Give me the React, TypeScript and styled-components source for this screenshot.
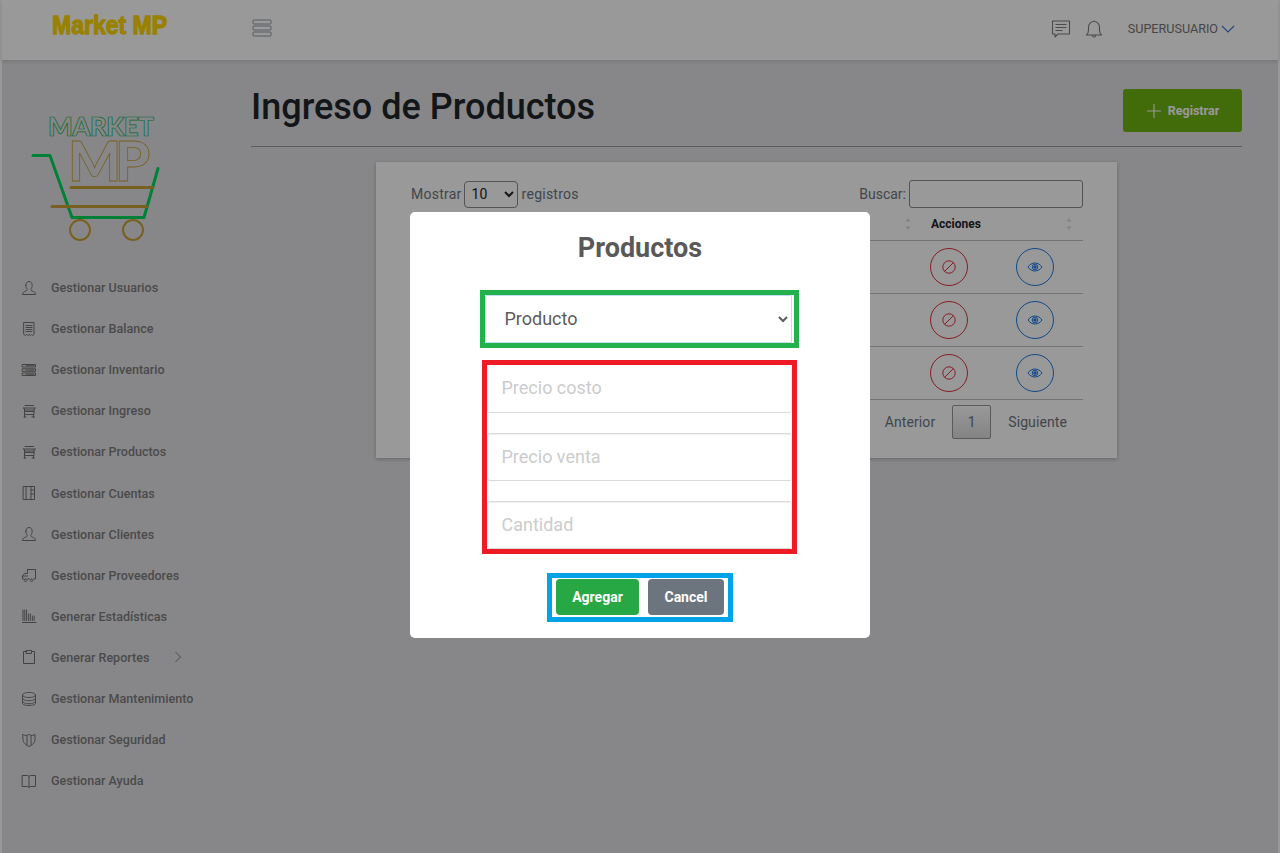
import React from "react";
import styled, { createGlobalStyle } from "styled-components";

const GlobalStyle = createGlobalStyle`
  html, body {
    margin: 0;
    padding: 0;
    height: 100%;
    overflow: hidden;
    background: #fff;
    font-family: Roboto, "Liberation Sans", sans-serif;
  }
  * {
    box-sizing: border-box;
  }
`;

const Page = styled.div`
  margin: 0 2px;
  height: 853px;
  background: #e2e2e5;
  display: flex;
  flex-direction: column;
`;

const Topbar = styled.header`
  height: 60px;
  flex: none;
  background: #fff;
  display: flex;
  align-items: center;
  padding: 0 43px 0 0;
  box-shadow: 0 1px 4px rgba(40, 40, 60, 0.2);
`;

const Brand = styled.div`
  width: 250px;
  padding-left: 50px;
  font-family: "Liberation Sans", sans-serif;
  font-weight: 700;
  font-size: 23px;
  color: #ffd700;
  -webkit-text-stroke: 1.1px #ffd700;
  white-space: nowrap;
  transform: scaleY(1.15);
  transform-origin: 0 50%;
  margin-top: -9px;
`;

const MenuToggle = styled.svg`
  display: block;
  width: 20px;
  height: 18px;
  margin-top: -5px;
`;

const TopRight = styled.div`
  margin-left: auto;
  margin-top: -3px;
  display: flex;
  align-items: center;
  color: #757575;
  font-size: 12.6px;
`;

const UserName = styled.span`
  margin: 0 3px 0 24px;
`;

const Body = styled.div`
  flex: 1;
  display: flex;
  min-height: 0;
`;

const Sidebar = styled.aside`
  width: 249px;
  flex: none;
  padding-top: 53px;
`;

const LogoBox = styled.svg`
  display: block;
  width: 160px;
  height: 131px;
  margin: 0 0 23.05px 27px;
`;

const NavList = styled.nav`
  display: flex;
  flex-direction: column;
`;

const NavItem = styled.a`
  height: 41.1px;
  display: flex;
  align-items: center;
  gap: 14px;
  padding-left: 19px;
  font-size: 12.55px;
  font-weight: 500;
  color: #7c7c7c;
`;

const NavChevron = styled.svg`
  width: 8px;
  height: 12px;
  margin-left: 11px;
`;

const Main = styled.main`
  flex: 1;
  padding: 29px 36px 0 0;
`;

const Heading = styled.div`
  height: 58px;
  display: flex;
  align-items: flex-start;
  justify-content: space-between;
  border-bottom: 1px solid #9b9ba0;
`;

const Title = styled.h1`
  margin: -3px 0 0;
  font-size: 36px;
  font-weight: 500;
  line-height: 43px;
  color: #212529;
`;

const RegisterButton = styled.button`
  width: 119px;
  height: 43px;
  border: none;
  border-radius: 3px;
  background: #6fb30f;
  color: #fff;
  display: flex;
  align-items: center;
  justify-content: center;
  gap: 6px;
  font-family: inherit;
  font-size: 12.5px;
  font-weight: 700;
`;

const Card = styled.section`
  width: 741px;
  height: 296px;
  margin: 15px auto 0;
  padding: 18px 34px 0;
  background: #fff;
  box-shadow: 0 1px 4px rgba(40, 40, 60, 0.3);
  color: #6c757d;
  font-size: 14px;
`;

const TableTools = styled.div`
  height: 28px;
  display: flex;
  align-items: center;
  justify-content: space-between;
`;

const LengthLabel = styled.label`
  display: flex;
  align-items: center;
  gap: 3px;
  padding-left: 1px;
  letter-spacing: 0.25px;
`;

const LengthSelect = styled.select`
  width: 54px;
  height: 27px;
  margin: 0 1px 0 -1px;
  padding: 0 0 0 3px;
  border: 1px solid #8a8a8a;
  border-radius: 4px;
  background: #fff;
  color: #212529;
  font-family: inherit;
  font-size: 14px;
`;

const SearchLabel = styled.label`
  display: flex;
  align-items: center;
  gap: 3px;
`;

const SearchInput = styled.input`
  width: 174px;
  height: 28px;
  border: 1px solid #8a8a8a;
  border-radius: 3px;
  background: #fff;
`;

const TableHead = styled.div`
  height: 29px;
  margin-top: 4px;
  padding-bottom: 4px;
  display: flex;
  align-items: center;
  border-bottom: 1px solid #c4c4c4;
  font-size: 12px;
  font-weight: 700;
  color: #212529;
`;

const SortMark = styled.svg<{ $left: number }>`
  width: 6px;
  height: 14px;
  margin-left: ${(p) => p.$left}px;
`;

const HeadLabel = styled.span`
  margin-left: 20px;
  width: 135px;
`;

const TableRow = styled.div`
  height: 53px;
  display: flex;
  align-items: center;
  justify-content: flex-end;
  gap: 48px;
  padding-right: 29px;
  border-bottom: 1px solid #c4c4c4;
  &:last-of-type {
    height: 54px;
    border-bottom: 2px solid #bcbcbc;
  }
`;

const CircleButton = styled.button<{ $color: string }>`
  width: 38px;
  height: 38px;
  padding: 0;
  border: 1px solid ${(p) => p.$color};
  border-radius: 50%;
  background: transparent;
  color: ${(p) => p.$color};
  display: flex;
  align-items: center;
  justify-content: center;
`;

const Pagination = styled.div`
  margin-top: 5px;
  padding-right: 16px;
  display: flex;
  align-items: center;
  justify-content: flex-end;
  letter-spacing: 0.1px;
`;

const PageCurrent = styled.span`
  width: 39px;
  height: 34px;
  margin: 0 17px;
  display: flex;
  align-items: center;
  justify-content: center;
  border: 1px solid #979797;
  border-radius: 2px;
  background: linear-gradient(#fff, #dcdcdc);
`;

const Overlay = styled.div`
  position: fixed;
  inset: 0;
  background: rgba(0, 0, 0, 0.4);
  display: flex;
  justify-content: center;
  align-items: flex-start;
  padding-top: 212px;
`;

const Modal = styled.div`
  width: 460px;
  height: 426px;
  background: #fff;
  border-radius: 5px;
  display: flex;
  flex-direction: column;
  align-items: center;
  padding-top: 20px;
`;

const ModalTitle = styled.h2`
  margin: 0;
  font-size: 27px;
  font-weight: 700;
  line-height: 32px;
  color: #595959;
`;

const Marked = styled.div<{ $color: string }>`
  border: 5px solid ${(p) => p.$color};
  display: flex;
`;

const ProductBox = styled(Marked)`
  width: 319px;
  height: 58px;
  margin: 26px 2px 0 0;
  padding-right: 2px;
`;

const ProductSelect = styled.select`
  width: 100%;
  height: 48px;
  padding: 0 0 2px 15px;
  border: 1px solid #c3dcf2;
  border-radius: 1px;
  outline: none;
  background: #fff;
  color: #5c5c5c;
  font-family: inherit;
  font-size: 18px;
`;

const PriceBox = styled(Marked)`
  width: 315px;
  height: 194px;
  margin: 12px 2px 0 0;
  flex-direction: column;
  gap: 20.5px;
`;

const PriceInput = styled.input`
  width: 100%;
  flex: 1;
  min-height: 0;
  padding: 0 14px 2px;
  border: 1px solid #d9d9d9;
  border-top-color: transparent;
  border-left-color: #f2f2f2;
  border-right-color: #f2f2f2;
  border-radius: 3px;
  outline: none;
  background: #fff;
  color: #545454;
  font-family: inherit;
  font-size: 18px;
  &:not(:first-child) {
    border-top-color: #d9d9d9;
    box-shadow: inset 0 1px 1px rgba(0, 0, 0, 0.06);
  }
  &::placeholder {
    color: #ccc;
  }
`;

const ActionsBox = styled(Marked)`
  width: 186px;
  height: 49px;
  margin-top: 19px;
  padding: 1px 4px 0;
  gap: 9px;
  justify-content: center;
`;

const ActionButton = styled.button<{ $bg: string; $w: number }>`
  width: ${(p) => p.$w}px;
  height: 36px;
  padding: 0;
  border: none;
  border-radius: 4px;
  background: ${(p) => p.$bg};
  color: #fff;
  font-family: inherit;
  font-size: 14px;
  font-weight: 700;
`;

const Glyph = styled.svg`
  width: 16px;
  height: 16px;
  flex: none;
  fill: none;
  stroke: #717171;
  stroke-width: 1;
  stroke-linejoin: round;
  stroke-linecap: round;
`;

const TopIcon = styled.svg<{ $gap?: number }>`
  width: 20px;
  height: 20px;
  margin-left: ${(p) => p.$gap ?? 0}px;
  fill: none;
  stroke: #7d7d7d;
  stroke-width: 1.1;
  stroke-linejoin: round;
`;

const ActionGlyph = styled.svg`
  width: 16px;
  height: 16px;
  fill: none;
  stroke: currentColor;
  stroke-width: 1;
`;

const icons: Record<string, React.ReactNode> = {
  user: <path d="M4.800 5.500c0-2.600 1.300-4 3.200-4s3.200 1.400 3.200 4c0 1.700-.9 2.800-1.300 3.600-.3.800.2 1.500 1.500 2 1.700.6 3 1.300 3.100 3.400H1.500c.1-2.100 1.400-2.800 3.100-3.400 1.300-.5 1.800-1.200 1.500-2-.4-.8-1.300-1.900-1.300-3.600z" />,
  receipt: <path d="M3 1.500h10v12l-1.250 1-1.250-1-1.250 1-1.250-1-1.250 1-1.250-1-1.250 1L3 13.500zM5 4.500h6M5 6.500h6M5 8.500h6M5 10.500h6" />,
  stack: <path d="M1.500 2.500h13v2.500h-13zM1.500 6.800h13v2.500h-13zM1.500 11h13v2.500h-13zM5 3.700h8M5 8h8M5 12.200h8" />,
  cart: <path d="M4 2.500h8.500M2.500 5h12L13 6v5.500H3.500V6zM3.500 8.500H13M3.500 7h9.500M3.500 11.500v2.500M5 14H3M12.500 11.500v2.500M13.500 14h-2.500" />,
  book: <path d="M2.500 1.500h11v13h-11zM5 1.500v13M10 1.500v13M10 5h3.500M10 9h3.500" />,
  truck: <path d="M6.500 2.500h8v9.500h-2M8.500 12H6M6.500 2.500v4h-3l-2 2.500v3H3M1.500 9h5M4.500 12a1.300 1.300 0 1 0 .01 0M10.500 12a1.300 1.300 0 1 0 .01 0" />,
  chart: <path d="M1.500 14.500h13.500M2 2v10.500M3.800 2v10.500M5.600 2v10.500M7.600 6v6.500M9.400 6v6.500M11.400 8v4.500M13.200 8v4.500" />,
  clip: <path d="M5.500 2.500H2.500v12h11v-12h-3M5.500 1.500h5v3h-5z" />,
  db: <path d="M1.500 4c0-1.500 3-2.500 6.500-2.500s6.500 1 6.500 2.500v8.500c0 1.200-3 2-6.500 2s-6.500-.8-6.500-2zM1.500 4c0 1.500 3 2.500 6.500 2.500s6.500-1 6.500-2.500M1.500 7.200c0 1.500 3 2.500 6.500 2.500s6.500-1 6.500-2.500M1.500 10.200c0 1.500 3 2.500 6.500 2.500s6.500-1 6.500-2.500" />,
  shield: <path d="M2 2.500c1.500 0 1.500 1 3 1s1.500-1 3-1 1.500 1 3 1 1.500-1 3-1v5c0 3.500-3 5.500-6 7-3-1.500-6-3.500-6-7zM6 3.500V12.800M10 3.500V12.800" />,
  help: <path d="M1.500 2.500h5c.8 0 1.500.4 1.500 1 0-.6.7-1 1.500-1h5v11h-5c-.8 0-1.500.4-1.500 1 0-.6-.7-1-1.500-1h-5zM8 3.500v11" />,
};

const navItems = [
  { label: "Gestionar Usuarios", icon: "user" },
  { label: "Gestionar Balance", icon: "receipt" },
  { label: "Gestionar Inventario", icon: "stack" },
  { label: "Gestionar Ingreso", icon: "cart" },
  { label: "Gestionar Productos", icon: "cart" },
  { label: "Gestionar Cuentas", icon: "book" },
  { label: "Gestionar Clientes", icon: "user" },
  { label: "Gestionar Proveedores", icon: "truck" },
  { label: "Generar Estadísticas", icon: "chart" },
  { label: "Generar Reportes", icon: "clip", more: true },
  { label: "Gestionar Mantenimiento", icon: "db" },
  { label: "Gestionar Seguridad", icon: "shield" },
  { label: "Gestionar Ayuda", icon: "help" },
];

function Logo() {
  return (
    <LogoBox viewBox="29 113 160 131">
      <text
        x="48"
        y="136"
        textLength="106"
        fontFamily="Lato, sans-serif"
        fontSize="26"
        fontWeight="900"
        fill="none"
        stroke="#12b050"
        strokeWidth="0.7"
      >
        MARKET
      </text>
      <text
        x="68"
        y="181"
        textLength="82"
        fontFamily="Lato, sans-serif"
        fontSize="56"
        fontWeight="900"
        fill="none"
        stroke="#c9a038"
        strokeWidth="0.8"
      >
        MP
      </text>
      <path
        d="M33 155.500h17l22 62h72l14-49"
        fill="none"
        stroke="#00d85a"
        strokeWidth="3"
        strokeLinecap="round"
        strokeLinejoin="round"
      />
      <path
        d="M71 187.500h82M52 206.500h95"
        fill="none"
        stroke="#c9a038"
        strokeWidth="3"
        strokeLinecap="round"
      />
      <circle cx="80" cy="230" r="10" fill="none" stroke="#c9a038" strokeWidth="2" />
      <circle cx="133" cy="230" r="10" fill="none" stroke="#c9a038" strokeWidth="2" />
    </LogoBox>
  );
}

function SortArrows({ left }: { left: number }) {
  return (
    <SortMark $left={left} viewBox="0 0 6 14">
      <path d="M3 1l2.500 3.500h-5z" fill="#dcdcdc" />
      <path d="M3 13L.5 9.500h5z" fill="#dcdcdc" />
    </SortMark>
  );
}

function ActionRow() {
  return (
    <TableRow>
      <CircleButton $color="#e0323c">
        <ActionGlyph viewBox="0 0 16 16">
          <circle cx="8" cy="8" r="6.200" />
          <path d="M3.600 12.400l8.800-8.800" />
        </ActionGlyph>
      </CircleButton>
      <CircleButton $color="#1f7ae0">
        <ActionGlyph viewBox="0 0 16 16">
          <path d="M1 8c1.800-2.600 4.200-4 7-4s5.200 1.400 7 4c-1.800 2.600-4.200 4-7 4s-5.200-1.400-7-4z" />
          <circle cx="8" cy="8" r="2.800" />
          <circle cx="8" cy="8" r="1.200" fill="currentColor" />
        </ActionGlyph>
      </CircleButton>
    </TableRow>
  );
}

export default function App() {
  return (
    <>
      <GlobalStyle />
      <Page>
        <Topbar>
          <Brand>Market MP</Brand>
          <MenuToggle viewBox="0 0 20 18" fill="none" stroke="#858c96" strokeWidth="0.9">
            <rect x="1" y="1" width="18" height="4" rx="0.8" />
            <rect x="1" y="7" width="18" height="4" rx="0.8" />
            <rect x="1" y="13" width="18" height="4" rx="0.8" />
          </MenuToggle>
          <TopRight>
            <TopIcon viewBox="0 0 20 20">
              <path d="M1.500 2h17v13H7l-3 3v-3H1.500zM4.500 5.500h11M4.500 8.500h11M4.500 11.500h7" />
            </TopIcon>
            <TopIcon $gap={13} viewBox="0 0 20 20">
              <path d="M2.500 16c1.500-1.200 2-2.500 2-5V8a5.500 5.500 0 0 1 11 0v3c0 2.500.5 3.800 2 5zM8.500 16.500a1.500 1.500 0 0 0 3 0M10 2.500v-1" />
            </TopIcon>
            <UserName>SUPERUSUARIO</UserName>
            <svg width="14" height="8" viewBox="0 0 14 8" fill="none" stroke="#4a73d8" strokeWidth="1.2">
              <path d="M1 1l6 6 6-6" />
            </svg>
          </TopRight>
        </Topbar>
        <Body>
          <Sidebar>
            <Logo />
            <NavList>
              {navItems.map((item) => (
                <NavItem key={item.label}>
                  <Glyph viewBox="0 0 16 16">{icons[item.icon]}</Glyph>
                  {item.label}
                  {item.more && (
                    <NavChevron viewBox="0 0 8 12" fill="none" stroke="#7c7c7c" strokeWidth="1">
                      <path d="M1.500 1l5 5-5 5" />
                    </NavChevron>
                  )}
                </NavItem>
              ))}
            </NavList>
          </Sidebar>
          <Main>
            <Heading>
              <Title>Ingreso de Productos</Title>
              <RegisterButton>
                <svg width="16" height="16" viewBox="0 0 16 16" stroke="#fff" strokeWidth="1.1">
                  <path d="M8 1v14M1 8h14" />
                </svg>
                Registrar
              </RegisterButton>
            </Heading>
            <Card>
              <TableTools>
                <LengthLabel>
                  Mostrar
                  <LengthSelect defaultValue="10">
                    <option>10</option>
                    <option>25</option>
                    <option>50</option>
                  </LengthSelect>
                  registros
                </LengthLabel>
                <SearchLabel>
                  Buscar:
                  <SearchInput />
                </SearchLabel>
              </TableTools>
              <TableHead>
                <SortArrows left={495} />
                <HeadLabel>Acciones</HeadLabel>
                <SortArrows left={0} />
              </TableHead>
              <ActionRow />
              <ActionRow />
              <ActionRow />
              <Pagination>
                Anterior
                <PageCurrent>1</PageCurrent>
                Siguiente
              </Pagination>
            </Card>
          </Main>
        </Body>
      </Page>
      <Overlay>
        <Modal>
          <ModalTitle>Productos</ModalTitle>
          <ProductBox $color="#22b14c">
            <ProductSelect defaultValue="Producto">
              <option>Producto</option>
            </ProductSelect>
          </ProductBox>
          <PriceBox $color="#ed1c24">
            <PriceInput placeholder="Precio costo" />
            <PriceInput placeholder="Precio venta" />
            <PriceInput placeholder="Cantidad" />
          </PriceBox>
          <ActionsBox $color="#00a2e8">
            <ActionButton $bg="#28a745" $w={83}>Agregar</ActionButton>
            <ActionButton $bg="#6c757d" $w={76}>Cancel</ActionButton>
          </ActionsBox>
        </Modal>
      </Overlay>
    </>
  );
}
